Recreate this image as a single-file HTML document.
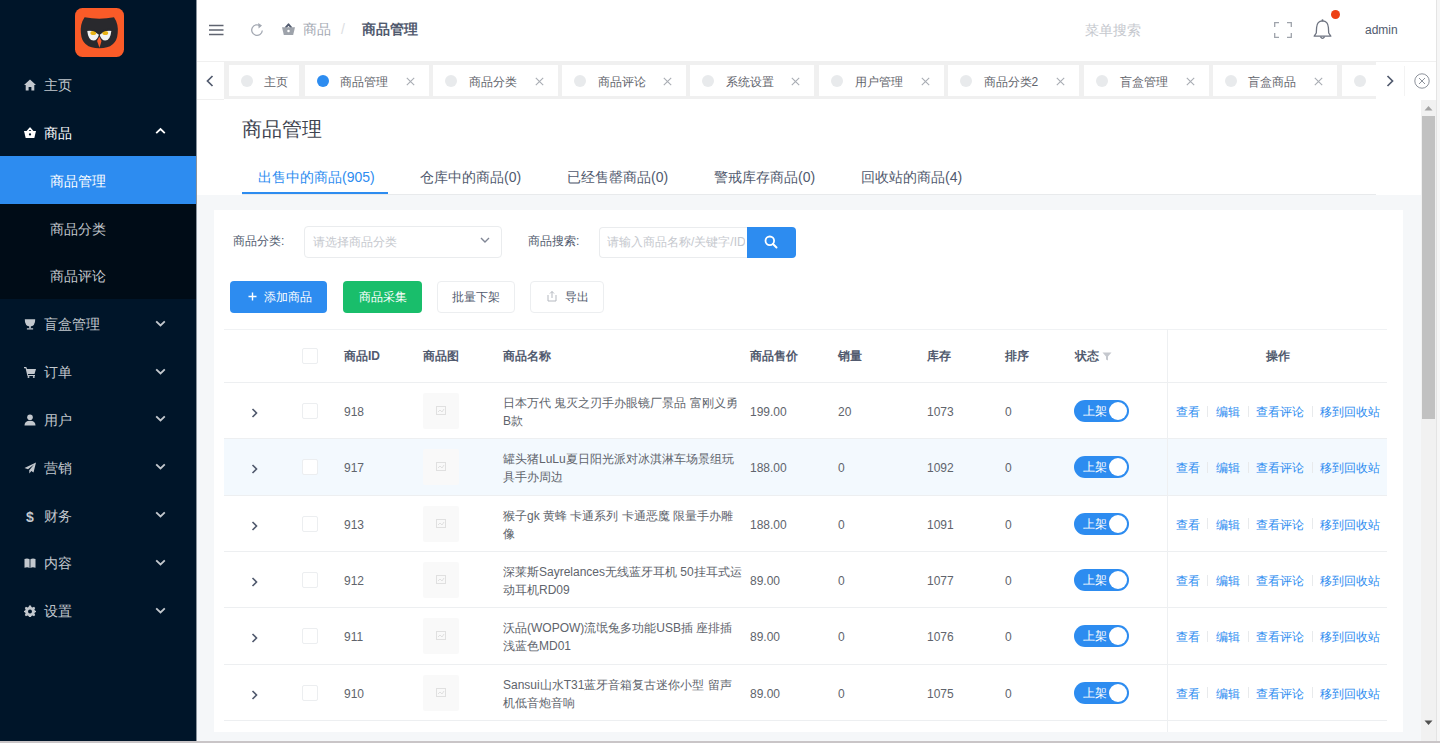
<!DOCTYPE html>
<html><head><meta charset="utf-8">
<style>
*{box-sizing:border-box;margin:0;padding:0}
html,body{width:1440px;height:743px;overflow:hidden;background:#fff;font-family:"Liberation Sans",sans-serif;color:#515a6e;position:relative}
.a{position:absolute}
#side{left:0;top:0;width:196px;height:743px;background:#001529}
.sub{left:0;top:156px;width:196px;height:144px;background:#000c17}
.mtx{left:44px;height:48px;font-size:14px;line-height:48px;white-space:nowrap;padding-top:1px}
.stx{left:50px;height:48px;font-size:14px;line-height:48px;white-space:nowrap;padding-top:1px}
#tabsbar{left:224px;top:61px;width:1152px;height:38px;background:#f0f0f0}
.tab{top:65px;height:31px;background:#fff;font-size:12px;line-height:31px;color:#5f636b;white-space:nowrap}
.tab .dot{position:absolute;left:12px;top:9.5px;width:12px;height:12px;border-radius:50%}
.tab .tt{position:absolute;left:35.5px;top:1.5px}
.tab .cl{position:absolute;top:12px}
#content{left:197px;top:100px;width:1224px;height:641px;background:#f5f7f9}
#phead{left:197px;top:100px;width:1224px;height:95px;background:#fff}
.card{left:214px;top:210px;width:1189px;height:522px;background:#fff}
.lbl{font-size:12px;color:#515a6e}
.btn{height:32px;border-radius:4px;font-size:12px;line-height:32px;text-align:center;white-space:nowrap}
.th{font-size:12px;font-weight:bold;color:#515a6e;line-height:16px;white-space:nowrap}
.td{font-size:12px;color:#60646c;line-height:18px}
.hl{height:1px;background:#edeff1}
.sw{width:55px;height:22px;border-radius:11px;background:#2d8cf0;color:#fff;font-size:12px;line-height:22px}
.sw .k{position:absolute;right:2px;top:2px;width:18px;height:18px;border-radius:50%;background:#fff}
.sw .t{position:absolute;left:9px;top:0}
.op{font-size:12px;color:#2d8cf0;line-height:16px;white-space:nowrap}
.dv{width:1px;height:11px;background:#e8eaec}
#sbar{left:1421px;top:100px;width:15px;height:641px;background:#f1f1f1}
#thumb{left:1422px;top:116px;width:13px;height:303px;background:#c1c1c1}
#rstrip{left:1436px;top:0;width:4px;height:743px;background:#f6f6f6;border-left:1px solid #e4e4e4}
#bline{left:0;top:741px;width:1440px;height:2px;background:#c9c5c7}

</style></head><body>

<div id="side" class="a"></div>
<div class="a sub" style="top:155.68px;height:143.52px"></div>
<div class="a" style="left:0;top:155.68px;width:196px;height:47.84px;background:#2d8cf0"></div>
<svg class="a" style="left:74.5px;top:7.8px" width="49" height="49" viewBox="0 0 49 49">
<rect width="49" height="49" rx="7.5" fill="#fa5b28"/>
<path d="M9.6 9.3 Q24.3 12.2 39 9.3 Q43.6 16 42.7 25 Q41.7 40.3 24.3 40.3 Q6.9 40.3 5.9 25 Q5 16 9.6 9.3Z" fill="#29292d"/>
<path d="M12.2 22.6 Q18 21.8 23.9 26.8 Q22.4 32.6 18.4 32.6 Q13.2 32.6 12.2 22.6Z" fill="#f2f2f2"/>
<path d="M36.4 22.6 Q30.6 21.8 24.7 26.8 Q26.2 32.6 30.2 32.6 Q35.4 32.6 36.4 22.6Z" fill="#f2f2f2"/>
<ellipse cx="18.3" cy="25" rx="2.9" ry="2.1" fill="#e9b314"/>
<ellipse cx="30.3" cy="25" rx="2.9" ry="2.1" fill="#e9b314"/>
<path d="M11.5 22.9 Q18 21.2 24.3 26.2 Q30.6 21.2 37.1 22.9 L37.2 21.2 Q30.6 19.6 24.3 24.4 Q18 19.6 11.4 21.2Z" fill="#29292d"/>
<path d="M24.3 28.6 L26.5 33 L24.5 39.8 L22.1 33Z" fill="#fa5b28"/>
</svg>
<svg class="a" style="left:24px;top:79.0px;color:#c3c8ce" width="12" height="12" viewBox="0 0 12 12" fill="#c3c8ce"><path d="M6 0.5 L12 6 L10.3 6 L10.3 11.5 L7.4 11.5 L7.4 8 L4.6 8 L4.6 11.5 L1.7 11.5 L1.7 6 L0 6Z"/></svg>
<div class="a mtx" style="top:60.0px;color:#c3c8ce">主页</div>
<svg class="a" style="left:24px;top:126.84px;color:#ffffff" width="12" height="12" viewBox="0 0 12 12" fill="#ffffff"><path d="M3.2 4.5 L6 1.2 L8.8 4.5" fill="none" stroke="currentColor" stroke-width="1.7" stroke-linejoin="round"/><path d="M0 4 H12 L10.3 11 H1.7Z"/><circle cx="6" cy="7.4" r="1.15" fill="#001529"/></svg>
<div class="a mtx" style="top:107.84px;color:#ffffff">商品</div>
<svg class="a" style="left:154.5px;top:127.34px" width="11" height="9" viewBox="0 0 11 9"><path d="M1.2 6.2 L5.5 2 L9.8 6.2" fill="none" stroke="#ffffff" stroke-width="1.8"/></svg>
<svg class="a" style="left:24px;top:318.2px;color:#c3c8ce" width="12" height="12" viewBox="0 0 12 12" fill="#c3c8ce"><path d="M0.8 1.2 H11.2 Q11.4 8.2 6 8.4 Q0.6 8.2 0.8 1.2Z"/><rect x="5.2" y="8" width="1.6" height="2.3"/><rect x="2.8" y="10.2" width="6.4" height="1.4" rx="0.5"/></svg>
<div class="a mtx" style="top:299.2px;color:#c3c8ce">盲盒管理</div>
<svg class="a" style="left:154.5px;top:318.7px" width="11" height="9" viewBox="0 0 11 9"><path d="M1.2 2.3 L5.5 6.5 L9.8 2.3" fill="none" stroke="#c3c8ce" stroke-width="1.8"/></svg>
<svg class="a" style="left:24px;top:366.04px;color:#c3c8ce" width="12" height="12" viewBox="0 0 12 12" fill="#c3c8ce"><path d="M0 1 L2.3 1 L3 3 L12 3 L10.5 8 L3.8 8 L4.2 9 L11 9 L11 10 L3.4 10 L1.6 2.2 L0 2.2Z"/><circle cx="4.5" cy="11" r="1"/><circle cx="9.8" cy="11" r="1"/></svg>
<div class="a mtx" style="top:347.04px;color:#c3c8ce">订单</div>
<svg class="a" style="left:154.5px;top:366.54px" width="11" height="9" viewBox="0 0 11 9"><path d="M1.2 2.3 L5.5 6.5 L9.8 2.3" fill="none" stroke="#c3c8ce" stroke-width="1.8"/></svg>
<svg class="a" style="left:24px;top:413.88px;color:#c3c8ce" width="12" height="12" viewBox="0 0 12 12" fill="#c3c8ce"><circle cx="6" cy="3.3" r="2.8"/><path d="M0.5 11.5 Q0.5 6.8 6 6.8 Q11.5 6.8 11.5 11.5Z"/></svg>
<div class="a mtx" style="top:394.88px;color:#c3c8ce">用户</div>
<svg class="a" style="left:154.5px;top:414.38px" width="11" height="9" viewBox="0 0 11 9"><path d="M1.2 2.3 L5.5 6.5 L9.8 2.3" fill="none" stroke="#c3c8ce" stroke-width="1.8"/></svg>
<svg class="a" style="left:24px;top:461.72px;color:#c3c8ce" width="12" height="12" viewBox="0 0 12 12" fill="#c3c8ce"><path d="M12 0.5 L0.5 6 L4 7.3 L10 2.5 L5.2 8.2 L5.4 11.5 L7.3 9 L9.5 10.5Z"/></svg>
<div class="a mtx" style="top:442.72px;color:#c3c8ce">营销</div>
<svg class="a" style="left:154.5px;top:462.22px" width="11" height="9" viewBox="0 0 11 9"><path d="M1.2 2.3 L5.5 6.5 L9.8 2.3" fill="none" stroke="#c3c8ce" stroke-width="1.8"/></svg>
<svg class="a" style="left:24px;top:509.56px;color:#c3c8ce" width="12" height="12" viewBox="0 0 12 12" fill="#c3c8ce"><text x="6" y="11.5" font-size="14" font-weight="bold" text-anchor="middle" font-family="Liberation Sans">$</text></svg>
<div class="a mtx" style="top:490.56px;color:#c3c8ce">财务</div>
<svg class="a" style="left:154.5px;top:510.06px" width="11" height="9" viewBox="0 0 11 9"><path d="M1.2 2.3 L5.5 6.5 L9.8 2.3" fill="none" stroke="#c3c8ce" stroke-width="1.8"/></svg>
<svg class="a" style="left:24px;top:557.4px;color:#c3c8ce" width="12" height="12" viewBox="0 0 12 12" fill="#c3c8ce"><path d="M0.5 2 Q3.5 1 5.6 2.3 L5.6 11 Q3.5 9.8 0.5 10.8Z M6.4 2.3 Q8.5 1 11.5 2 L11.5 10.8 Q8.5 9.8 6.4 11Z"/></svg>
<div class="a mtx" style="top:538.4px;color:#c3c8ce">内容</div>
<svg class="a" style="left:154.5px;top:557.9px" width="11" height="9" viewBox="0 0 11 9"><path d="M1.2 2.3 L5.5 6.5 L9.8 2.3" fill="none" stroke="#c3c8ce" stroke-width="1.8"/></svg>
<svg class="a" style="left:24px;top:605.24px;color:#c3c8ce" width="12" height="12" viewBox="0 0 12 12" fill="#c3c8ce"><path d="M5 0.5 L7 0.5 L7.4 2.1 L8.6 2.6 L10 1.8 L11.2 3 L10.4 4.4 L10.9 5.6 L12 6 L12 7 L10.9 7.4 L10.4 8.6 L11.2 10 L10 11.2 L8.6 10.4 L7.4 10.9 L7 12 L5 12 L4.6 10.9 L3.4 10.4 L2 11.2 L0.8 10 L1.6 8.6 L1.1 7.4 L0 7 L0 6 L1.1 5.6 L1.6 4.4 L0.8 3 L2 1.8 L3.4 2.6 L4.6 2.1Z"/><circle cx="6" cy="6.5" r="2" fill="#001529"/></svg>
<div class="a mtx" style="top:586.24px;color:#c3c8ce">设置</div>
<svg class="a" style="left:154.5px;top:605.74px" width="11" height="9" viewBox="0 0 11 9"><path d="M1.2 2.3 L5.5 6.5 L9.8 2.3" fill="none" stroke="#c3c8ce" stroke-width="1.8"/></svg>
<div class="a stx" style="top:155.68px;color:#fff">商品管理</div>
<div class="a stx" style="top:203.52px;color:#c3c8ce">商品分类</div>
<div class="a stx" style="top:251.36px;color:#c3c8ce">商品评论</div>
<div class="a" style="left:196px;top:0;width:1px;height:743px;background:#8a939d"></div>
<svg class="a" style="left:209px;top:24px" width="15" height="12" viewBox="0 0 15 12"><path d="M0 1.5H14.5M0 6H14.5M0 10.5H14.5" stroke="#5f6470" stroke-width="1.4"/></svg>
<svg class="a" style="left:250px;top:22px" width="14" height="15" viewBox="0 0 14 15"><path d="M10.6 4.2 A5.3 5.3 0 1 0 12.3 8.5" fill="none" stroke="#a4a9b3" stroke-width="1.3"/><path d="M8.2 1 L12 3.6 L8.6 6.4Z" fill="#a4a9b3"/></svg>
<svg class="a" style="left:282px;top:23px" width="13" height="13" viewBox="0 0 12 12" fill="#9ea3ab"><path d="M3.2 4.5 L6 1.2 L8.8 4.5" fill="none" stroke="currentColor" stroke-width="1.7" stroke-linejoin="round"/><path d="M0 4 H12 L10.3 11 H1.7Z"/><circle cx="6" cy="7.4" r="1.15" fill="#fff"/></svg>
<div class="a" style="left:303px;top:19px;font-size:14px;line-height:20px;color:#a4a9b3">商品</div>
<div class="a" style="left:341px;top:19px;font-size:14px;line-height:20px;color:#dcdee2">/</div>
<div class="a" style="left:362px;top:19px;font-size:14px;line-height:20px;color:#515a6e;font-weight:bold">商品管理</div>
<div class="a" style="left:1085px;top:20px;font-size:14px;line-height:20px;color:#c5c8ce">菜单搜索</div>
<svg class="a" style="left:1274px;top:22px" width="18" height="16" viewBox="0 0 18 16"><path d="M0.7 5V0.7H5M13 0.7H17.3V5M17.3 11V15.3H13M5 15.3H0.7V11" fill="none" stroke="#9ea3ab" stroke-width="1.3"/></svg>
<svg class="a" style="left:1313px;top:19px" width="19" height="21" viewBox="0 0 19 21"><path d="M9.5 1.8 Q4 2 3.6 8.5 L3.3 14 L1.2 17.2 H17.8 L15.7 14 L15.4 8.5 Q15 2 9.5 1.8Z" fill="none" stroke="#6d7380" stroke-width="1.3" stroke-linejoin="round"/><path d="M7.4 17.6 Q9.5 21 11.6 17.6" fill="none" stroke="#6d7380" stroke-width="1.3"/><circle cx="9.5" cy="1.3" r="1" fill="#6d7380"/></svg>
<div class="a" style="left:1331px;top:10px;width:9px;height:9px;border-radius:50%;background:#ed4014"></div>
<div class="a" style="left:1365px;top:20px;font-size:12px;line-height:20px;color:#515a6e">admin</div>
<div class="a" style="left:197px;top:61px;width:1239px;height:1px;background:#f0f0f0"></div>
<div id="tabsbar" class="a"></div>
<div class="a" style="left:197px;top:99px;width:27px;height:1px;background:#f0f0f0"></div>
<svg class="a" style="left:206px;top:75px" width="8" height="12" viewBox="0 0 8 12"><path d="M6.5 1 L1.5 6 L6.5 11" fill="none" stroke="#515a6e" stroke-width="1.7"/></svg>
<svg class="a" style="left:1386px;top:75px" width="8" height="12" viewBox="0 0 8 12"><path d="M1.5 1 L6.5 6 L1.5 11" fill="none" stroke="#515a6e" stroke-width="1.7"/></svg>
<div class="a" style="left:1404px;top:66px;width:1px;height:30px;background:#f3f3f3"></div>
<svg class="a" style="left:1414px;top:73px" width="16" height="16" viewBox="0 0 16 16"><circle cx="8" cy="8" r="7.2" fill="none" stroke="#8d929b" stroke-width="1"/><path d="M5 5L11 11M11 5L5 11" stroke="#8d929b" stroke-width="1"/></svg>
<div class="a tab" style="left:228.5px;width:70.5px"><span class="dot" style="background:#e8eaec"></span><span class="tt">主页</span></div>
<div class="a tab" style="left:304.75px;width:123.75px"><span class="dot" style="background:#2d8cf0"></span><span class="tt">商品管理</span><svg class="cl" style="left:100.75px" width="9" height="9" viewBox="0 0 9 9"><path d="M0.8 0.8L8.2 8.2M8.2 0.8L0.8 8.2" stroke="#a9adb4" stroke-width="1.1"/></svg></div>
<div class="a tab" style="left:433px;width:125px"><span class="dot" style="background:#e8eaec"></span><span class="tt">商品分类</span><svg class="cl" style="left:102px" width="9" height="9" viewBox="0 0 9 9"><path d="M0.8 0.8L8.2 8.2M8.2 0.8L0.8 8.2" stroke="#a9adb4" stroke-width="1.1"/></svg></div>
<div class="a tab" style="left:562px;width:124px"><span class="dot" style="background:#e8eaec"></span><span class="tt">商品评论</span><svg class="cl" style="left:101px" width="9" height="9" viewBox="0 0 9 9"><path d="M0.8 0.8L8.2 8.2M8.2 0.8L0.8 8.2" stroke="#a9adb4" stroke-width="1.1"/></svg></div>
<div class="a tab" style="left:690px;width:124px"><span class="dot" style="background:#e8eaec"></span><span class="tt">系统设置</span><svg class="cl" style="left:101px" width="9" height="9" viewBox="0 0 9 9"><path d="M0.8 0.8L8.2 8.2M8.2 0.8L0.8 8.2" stroke="#a9adb4" stroke-width="1.1"/></svg></div>
<div class="a tab" style="left:819px;width:124.5px"><span class="dot" style="background:#e8eaec"></span><span class="tt">用户管理</span><svg class="cl" style="left:101.5px" width="9" height="9" viewBox="0 0 9 9"><path d="M0.8 0.8L8.2 8.2M8.2 0.8L0.8 8.2" stroke="#a9adb4" stroke-width="1.1"/></svg></div>
<div class="a tab" style="left:948px;width:131px"><span class="dot" style="background:#e8eaec"></span><span class="tt">商品分类2</span><svg class="cl" style="left:108px" width="9" height="9" viewBox="0 0 9 9"><path d="M0.8 0.8L8.2 8.2M8.2 0.8L0.8 8.2" stroke="#a9adb4" stroke-width="1.1"/></svg></div>
<div class="a tab" style="left:1084px;width:124.5px"><span class="dot" style="background:#e8eaec"></span><span class="tt">盲盒管理</span><svg class="cl" style="left:101.5px" width="9" height="9" viewBox="0 0 9 9"><path d="M0.8 0.8L8.2 8.2M8.2 0.8L0.8 8.2" stroke="#a9adb4" stroke-width="1.1"/></svg></div>
<div class="a tab" style="left:1212.5px;width:124.0px"><span class="dot" style="background:#e8eaec"></span><span class="tt">盲盒商品</span><svg class="cl" style="left:101.0px" width="9" height="9" viewBox="0 0 9 9"><path d="M0.8 0.8L8.2 8.2M8.2 0.8L0.8 8.2" stroke="#a9adb4" stroke-width="1.1"/></svg></div>
<div class="a tab" style="left:1342px;width:34px"><span class="dot" style="background:#e8eaec"></span><span class="tt"></span></div>
<div id="content" class="a"></div>
<div id="phead" class="a"></div>
<div class="a" style="left:242px;top:115px;font-size:20px;line-height:28px;color:#3f4450">商品管理</div>
<div class="a" style="left:242px;top:194px;width:1134px;height:1px;background:#e8eaec"></div>
<div class="a" style="left:258px;top:167px;font-size:14px;line-height:20px;color:#2d8cf0;white-space:nowrap">出售中的商品(905)</div>
<div class="a" style="left:420px;top:167px;font-size:14px;line-height:20px;color:#515a6e;white-space:nowrap">仓库中的商品(0)</div>
<div class="a" style="left:567px;top:167px;font-size:14px;line-height:20px;color:#515a6e;white-space:nowrap">已经售罄商品(0)</div>
<div class="a" style="left:714px;top:167px;font-size:14px;line-height:20px;color:#515a6e;white-space:nowrap">警戒库存商品(0)</div>
<div class="a" style="left:861px;top:167px;font-size:14px;line-height:20px;color:#515a6e;white-space:nowrap">回收站的商品(4)</div>
<div class="a" style="left:242px;top:192px;width:146px;height:2px;background:#2d8cf0"></div>
<div class="a card"></div>
<div class="a lbl" style="left:233px;top:232px;line-height:18px">商品分类:</div>
<div class="a" style="left:304px;top:226px;width:198px;height:32px;border:1px solid #eaecee;border-radius:4px"></div>
<div class="a" style="left:313px;top:233px;font-size:12px;line-height:18px;color:#c5c8ce">请选择商品分类</div>
<svg class="a" style="left:480px;top:237px" width="10" height="7" viewBox="0 0 10 7"><path d="M1 1L5 5L9 1" fill="none" stroke="#808695" stroke-width="1.4"/></svg>
<div class="a lbl" style="left:528px;top:232px;line-height:18px">商品搜索:</div>
<div class="a" style="left:599px;top:227px;width:149px;height:31px;border:1px solid #eaecee;border-right:none;border-radius:4px 0 0 4px"></div>
<div class="a" style="left:607px;top:233px;width:138px;overflow:hidden;white-space:nowrap;font-size:12px;line-height:18px;color:#c5c8ce">请输入商品名称/关键字/ID</div>
<div class="a" style="left:747px;top:227px;width:49px;height:31px;background:#2d8cf0;border-radius:0 4px 4px 0"></div>
<svg class="a" style="left:764px;top:235px" width="14" height="14" viewBox="0 0 14 14"><circle cx="5.8" cy="5.8" r="4.3" fill="none" stroke="#fff" stroke-width="1.8"/><path d="M9 9L12.5 12.5" stroke="#fff" stroke-width="2" stroke-linecap="round"/></svg>
<div class="a btn" style="left:230px;top:281px;width:97px;background:#2d8cf0;color:#fff"></div>
<svg class="a" style="left:248px;top:292px" width="9" height="9" viewBox="0 0 9 9"><path d="M4.5 0.5V8.5M0.5 4.5H8.5" stroke="#fff" stroke-width="1.4"/></svg>
<div class="a" style="left:264px;top:288px;font-size:12px;line-height:18px;color:#fff">添加商品</div>
<div class="a btn" style="left:343px;top:281px;width:79px;background:#19be6b;color:#fff">商品采集</div>
<div class="a btn" style="left:437px;top:281px;width:78px;border:1px solid #eceef0;color:#515a6e;line-height:30px">批量下架</div>
<div class="a btn" style="left:530px;top:281px;width:74px;border:1px solid #eceef0;color:#515a6e;line-height:30px"></div>
<svg class="a" style="left:547px;top:290px" width="10" height="12" viewBox="0 0 10 12"><path d="M1 5V11H9V5" fill="none" stroke="#b5b9c0" stroke-width="1"/><path d="M5 8V1.5M3 3.5L5 1.5L7 3.5" fill="none" stroke="#b5b9c0" stroke-width="1"/></svg>
<div class="a" style="left:565px;top:288px;font-size:12px;line-height:18px;color:#515a6e">导出</div>
<div class="a hl" style="top:329px;left:224px;width:1163px;background:#f0f2f4"></div>
<div class="a hl" style="top:382px;left:224px;width:1163px"></div>
<div class="a" style="left:302px;top:348px;width:16px;height:16px;border:1px solid #eceef0;border-radius:2px;background:#fff"></div>
<div class="a th" style="left:344px;top:348px">商品ID</div>
<div class="a th" style="left:423px;top:348px">商品图</div>
<div class="a th" style="left:503px;top:348px">商品名称</div>
<div class="a th" style="left:750px;top:348px">商品售价</div>
<div class="a th" style="left:838px;top:348px">销量</div>
<div class="a th" style="left:927px;top:348px">库存</div>
<div class="a th" style="left:1005px;top:348px">排序</div>
<div class="a th" style="left:1075px;top:348px">状态</div>
<svg class="a" style="left:1102px;top:352px" width="10" height="9" viewBox="0 0 10 9"><path d="M0.5 0.5H9.5L6 4.5V8.5L4 7.5V4.5Z" fill="#c5c8ce"/></svg>
<div class="a th" style="left:1266px;top:348px">操作</div>
<div class="a hl" style="top:438.3px;left:224px;width:1163px"></div>
<svg class="a" style="left:251px;top:408.15px" width="7" height="10" viewBox="0 0 7 10"><path d="M1.5 1L5.5 5L1.5 9" fill="none" stroke="#515a6e" stroke-width="1.6"/></svg>
<div class="a" style="left:302px;top:403.15px;width:16px;height:16px;border:1px solid #eceef0;border-radius:2px;background:#fff"></div>
<div class="a td" style="left:344px;top:403.15px">918</div>
<div class="a" style="left:423px;top:393.15px;width:36px;height:36px;background:#f9f9f9;border-radius:2px"></div>
<svg class="a" style="left:436px;top:406.15px" width="10" height="9" viewBox="0 0 10 9"><rect x="0.5" y="0.5" width="9" height="8" fill="none" stroke="#e0e0e0"/><path d="M2 6L4 4L6 6L8 3" fill="none" stroke="#e0e0e0"/></svg>
<div class="a td" style="left:503px;top:394.15px;white-space:nowrap">日本万代 鬼灭之刃手办眼镜厂景品 富刚义勇<br>B款</div>
<div class="a td" style="left:750px;top:403.15px">199.00</div>
<div class="a td" style="left:838px;top:403.15px">20</div>
<div class="a td" style="left:927px;top:403.15px">1073</div>
<div class="a td" style="left:1005px;top:403.15px">0</div>
<div class="a sw" style="left:1074px;top:400.15px"><span class="t">上架</span><span class="k"></span></div>
<div class="a op" style="left:1176px;top:404.15px">查看</div>
<div class="a dv" style="left:1207px;top:405.65px"></div>
<div class="a op" style="left:1216px;top:404.15px">编辑</div>
<div class="a dv" style="left:1248px;top:405.65px"></div>
<div class="a op" style="left:1256px;top:404.15px">查看评论</div>
<div class="a dv" style="left:1312px;top:405.65px"></div>
<div class="a op" style="left:1320px;top:404.15px">移到回收站</div>
<div class="a" style="left:224px;top:439.3px;width:1163px;height:55.3px;background:#f3f9fe"></div>
<div class="a hl" style="top:494.6px;left:224px;width:1163px"></div>
<svg class="a" style="left:251px;top:464.45px" width="7" height="10" viewBox="0 0 7 10"><path d="M1.5 1L5.5 5L1.5 9" fill="none" stroke="#515a6e" stroke-width="1.6"/></svg>
<div class="a" style="left:302px;top:459.45px;width:16px;height:16px;border:1px solid #eceef0;border-radius:2px;background:#fff"></div>
<div class="a td" style="left:344px;top:459.45px">917</div>
<div class="a" style="left:423px;top:449.45px;width:36px;height:36px;background:#f9f9f9;border-radius:2px"></div>
<svg class="a" style="left:436px;top:462.45px" width="10" height="9" viewBox="0 0 10 9"><rect x="0.5" y="0.5" width="9" height="8" fill="none" stroke="#e0e0e0"/><path d="M2 6L4 4L6 6L8 3" fill="none" stroke="#e0e0e0"/></svg>
<div class="a td" style="left:503px;top:450.45px;white-space:nowrap">罐头猪LuLu夏日阳光派对冰淇淋车场景组玩<br>具手办周边</div>
<div class="a td" style="left:750px;top:459.45px">188.00</div>
<div class="a td" style="left:838px;top:459.45px">0</div>
<div class="a td" style="left:927px;top:459.45px">1092</div>
<div class="a td" style="left:1005px;top:459.45px">0</div>
<div class="a sw" style="left:1074px;top:456.45px"><span class="t">上架</span><span class="k"></span></div>
<div class="a op" style="left:1176px;top:460.45px">查看</div>
<div class="a dv" style="left:1207px;top:461.95px"></div>
<div class="a op" style="left:1216px;top:460.45px">编辑</div>
<div class="a dv" style="left:1248px;top:461.95px"></div>
<div class="a op" style="left:1256px;top:460.45px">查看评论</div>
<div class="a dv" style="left:1312px;top:461.95px"></div>
<div class="a op" style="left:1320px;top:460.45px">移到回收站</div>
<div class="a hl" style="top:550.9px;left:224px;width:1163px"></div>
<svg class="a" style="left:251px;top:520.75px" width="7" height="10" viewBox="0 0 7 10"><path d="M1.5 1L5.5 5L1.5 9" fill="none" stroke="#515a6e" stroke-width="1.6"/></svg>
<div class="a" style="left:302px;top:515.75px;width:16px;height:16px;border:1px solid #eceef0;border-radius:2px;background:#fff"></div>
<div class="a td" style="left:344px;top:515.75px">913</div>
<div class="a" style="left:423px;top:505.75px;width:36px;height:36px;background:#f9f9f9;border-radius:2px"></div>
<svg class="a" style="left:436px;top:518.75px" width="10" height="9" viewBox="0 0 10 9"><rect x="0.5" y="0.5" width="9" height="8" fill="none" stroke="#e0e0e0"/><path d="M2 6L4 4L6 6L8 3" fill="none" stroke="#e0e0e0"/></svg>
<div class="a td" style="left:503px;top:506.75px;white-space:nowrap">猴子gk 黄蜂 卡通系列 卡通恶魔 限量手办雕<br>像</div>
<div class="a td" style="left:750px;top:515.75px">188.00</div>
<div class="a td" style="left:838px;top:515.75px">0</div>
<div class="a td" style="left:927px;top:515.75px">1091</div>
<div class="a td" style="left:1005px;top:515.75px">0</div>
<div class="a sw" style="left:1074px;top:512.75px"><span class="t">上架</span><span class="k"></span></div>
<div class="a op" style="left:1176px;top:516.75px">查看</div>
<div class="a dv" style="left:1207px;top:518.25px"></div>
<div class="a op" style="left:1216px;top:516.75px">编辑</div>
<div class="a dv" style="left:1248px;top:518.25px"></div>
<div class="a op" style="left:1256px;top:516.75px">查看评论</div>
<div class="a dv" style="left:1312px;top:518.25px"></div>
<div class="a op" style="left:1320px;top:516.75px">移到回收站</div>
<div class="a hl" style="top:607.1999999999999px;left:224px;width:1163px"></div>
<svg class="a" style="left:251px;top:577.05px" width="7" height="10" viewBox="0 0 7 10"><path d="M1.5 1L5.5 5L1.5 9" fill="none" stroke="#515a6e" stroke-width="1.6"/></svg>
<div class="a" style="left:302px;top:572.05px;width:16px;height:16px;border:1px solid #eceef0;border-radius:2px;background:#fff"></div>
<div class="a td" style="left:344px;top:572.05px">912</div>
<div class="a" style="left:423px;top:562.05px;width:36px;height:36px;background:#f9f9f9;border-radius:2px"></div>
<svg class="a" style="left:436px;top:575.05px" width="10" height="9" viewBox="0 0 10 9"><rect x="0.5" y="0.5" width="9" height="8" fill="none" stroke="#e0e0e0"/><path d="M2 6L4 4L6 6L8 3" fill="none" stroke="#e0e0e0"/></svg>
<div class="a td" style="left:503px;top:563.05px;white-space:nowrap">深莱斯Sayrelances无线蓝牙耳机 50挂耳式运<br>动耳机RD09</div>
<div class="a td" style="left:750px;top:572.05px">89.00</div>
<div class="a td" style="left:838px;top:572.05px">0</div>
<div class="a td" style="left:927px;top:572.05px">1077</div>
<div class="a td" style="left:1005px;top:572.05px">0</div>
<div class="a sw" style="left:1074px;top:569.05px"><span class="t">上架</span><span class="k"></span></div>
<div class="a op" style="left:1176px;top:573.05px">查看</div>
<div class="a dv" style="left:1207px;top:574.55px"></div>
<div class="a op" style="left:1216px;top:573.05px">编辑</div>
<div class="a dv" style="left:1248px;top:574.55px"></div>
<div class="a op" style="left:1256px;top:573.05px">查看评论</div>
<div class="a dv" style="left:1312px;top:574.55px"></div>
<div class="a op" style="left:1320px;top:573.05px">移到回收站</div>
<div class="a hl" style="top:663.5px;left:224px;width:1163px"></div>
<svg class="a" style="left:251px;top:633.35px" width="7" height="10" viewBox="0 0 7 10"><path d="M1.5 1L5.5 5L1.5 9" fill="none" stroke="#515a6e" stroke-width="1.6"/></svg>
<div class="a" style="left:302px;top:628.35px;width:16px;height:16px;border:1px solid #eceef0;border-radius:2px;background:#fff"></div>
<div class="a td" style="left:344px;top:628.35px">911</div>
<div class="a" style="left:423px;top:618.35px;width:36px;height:36px;background:#f9f9f9;border-radius:2px"></div>
<svg class="a" style="left:436px;top:631.35px" width="10" height="9" viewBox="0 0 10 9"><rect x="0.5" y="0.5" width="9" height="8" fill="none" stroke="#e0e0e0"/><path d="M2 6L4 4L6 6L8 3" fill="none" stroke="#e0e0e0"/></svg>
<div class="a td" style="left:503px;top:619.35px;white-space:nowrap">沃品(WOPOW)流氓兔多功能USB插 座排插<br>浅蓝色MD01</div>
<div class="a td" style="left:750px;top:628.35px">89.00</div>
<div class="a td" style="left:838px;top:628.35px">0</div>
<div class="a td" style="left:927px;top:628.35px">1076</div>
<div class="a td" style="left:1005px;top:628.35px">0</div>
<div class="a sw" style="left:1074px;top:625.35px"><span class="t">上架</span><span class="k"></span></div>
<div class="a op" style="left:1176px;top:629.35px">查看</div>
<div class="a dv" style="left:1207px;top:630.85px"></div>
<div class="a op" style="left:1216px;top:629.35px">编辑</div>
<div class="a dv" style="left:1248px;top:630.85px"></div>
<div class="a op" style="left:1256px;top:629.35px">查看评论</div>
<div class="a dv" style="left:1312px;top:630.85px"></div>
<div class="a op" style="left:1320px;top:629.35px">移到回收站</div>
<div class="a hl" style="top:719.8px;left:224px;width:1163px"></div>
<svg class="a" style="left:251px;top:689.65px" width="7" height="10" viewBox="0 0 7 10"><path d="M1.5 1L5.5 5L1.5 9" fill="none" stroke="#515a6e" stroke-width="1.6"/></svg>
<div class="a" style="left:302px;top:684.65px;width:16px;height:16px;border:1px solid #eceef0;border-radius:2px;background:#fff"></div>
<div class="a td" style="left:344px;top:684.65px">910</div>
<div class="a" style="left:423px;top:674.65px;width:36px;height:36px;background:#f9f9f9;border-radius:2px"></div>
<svg class="a" style="left:436px;top:687.65px" width="10" height="9" viewBox="0 0 10 9"><rect x="0.5" y="0.5" width="9" height="8" fill="none" stroke="#e0e0e0"/><path d="M2 6L4 4L6 6L8 3" fill="none" stroke="#e0e0e0"/></svg>
<div class="a td" style="left:503px;top:675.65px;white-space:nowrap">Sansui山水T31蓝牙音箱复古迷你小型 留声<br>机低音炮音响</div>
<div class="a td" style="left:750px;top:684.65px">89.00</div>
<div class="a td" style="left:838px;top:684.65px">0</div>
<div class="a td" style="left:927px;top:684.65px">1075</div>
<div class="a td" style="left:1005px;top:684.65px">0</div>
<div class="a sw" style="left:1074px;top:681.65px"><span class="t">上架</span><span class="k"></span></div>
<div class="a op" style="left:1176px;top:685.65px">查看</div>
<div class="a dv" style="left:1207px;top:687.15px"></div>
<div class="a op" style="left:1216px;top:685.65px">编辑</div>
<div class="a dv" style="left:1248px;top:687.15px"></div>
<div class="a op" style="left:1256px;top:685.65px">查看评论</div>
<div class="a dv" style="left:1312px;top:687.15px"></div>
<div class="a op" style="left:1320px;top:685.65px">移到回收站</div>
<div class="a" style="left:1167px;top:329px;width:1px;height:403px;background:#eef0f2"></div>
<div id="sbar" class="a"></div>
<svg class="a" style="left:1423px;top:104px" width="11" height="8" viewBox="0 0 11 8"><path d="M1.5 6.5L5.5 2L9.5 6.5Z" fill="#a3a3a3"/></svg>
<div id="thumb" class="a"></div>
<svg class="a" style="left:1423px;top:719px" width="11" height="8" viewBox="0 0 11 8"><path d="M1.5 1.5L5.5 6L9.5 1.5Z" fill="#505050"/></svg>
<div id="rstrip" class="a"></div>
<div id="bline" class="a"></div>

</body></html>
